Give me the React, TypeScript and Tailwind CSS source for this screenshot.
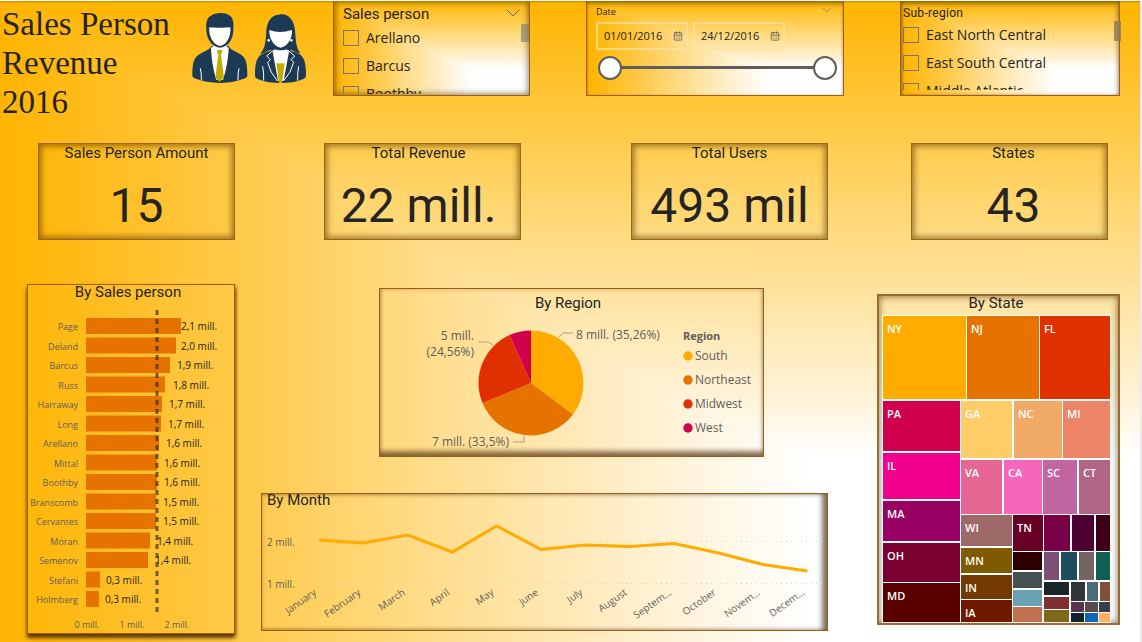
import React from "react";
import { CalendarDays, ChevronDown } from "lucide-react";

const pageFill =
  "bg-blend-darken bg-[image:linear-gradient(to_right,#ffb400_0%,#ffc02a_12%,#ffcc50_23%,#ffdb85_36%,#ffe9b8_50%,#fffaf0_66%,#ffffff_71%),linear-gradient(to_bottom,#ffb400_0%,#ffc63a_16%,#ffcb4a_21%,#ffdc85_38%,#ffe4a4_47%,#fff3d8_62%,#ffffff_71%)]";

const din = "font-['Roboto',sans-serif]";
const border = "border border-[#a05c10]";

const kpis = [
  { title: "Sales Person Amount", value: "15", col: "col-start-2" },
  { title: "Total Revenue", value: "22 mill.", col: "col-start-4 pr-2" },
  { title: "Total Users", value: "493 mil", col: "col-start-6" },
  { title: "States", value: "43", col: "col-start-8 pl-2" },
];

const people = [
  { name: "Page", end: 181, label: 181, value: "2,1 mill." },
  { name: "Deland", end: 176, label: 181, value: "2,0 mill." },
  { name: "Barcus", end: 170, label: 177, value: "1,9 mill." },
  { name: "Russ", end: 165, label: 173, value: "1,8 mill." },
  { name: "Harraway", end: 162, label: 169, value: "1,7 mill." },
  { name: "Long", end: 161, label: 168, value: "1,7 mill." },
  { name: "Arellano", end: 159, label: 166, value: "1,6 mill." },
  { name: "Mittal", end: 157, label: 164, value: "1,6 mill." },
  { name: "Boothby", end: 157, label: 164, value: "1,6 mill." },
  { name: "Branscomb", end: 156, label: 163, value: "1,5 mill." },
  { name: "Cervantes", end: 156, label: 163, value: "1,5 mill." },
  { name: "Moran", end: 150, label: 157, value: "1,4 mill." },
  { name: "Semenov", end: 148, label: 155, value: "1,4 mill." },
  { name: "Stefani", end: 100, label: 106, value: "0,3 mill." },
  { name: "Holmberg", end: 99, label: 105, value: "0,3 mill." },
];

const months: [string, number][] = [
  ["January", 540],
  ["February", 543],
  ["March", 535],
  ["April", 552],
  ["May", 526],
  ["June", 549.5],
  ["July", 545],
  ["August", 546.5],
  ["Septem...", 543.5],
  ["October", 553],
  ["Novem...", 564.5],
  ["Decem...", 571],
];
const monthX = (i: number) => 319 + i * 44.4;

const slices = [
  { name: "South", share: 35.26, color: "#ffab00" },
  { name: "Northeast", share: 33.5, color: "#e67200" },
  { name: "Midwest", share: 24.56, color: "#e03000" },
  { name: "West", share: 6.68, color: "#d1004c" },
];

// left, top, right, bottom, colour, label
const cells: [number, number, number, number, string, string?][] = [
  [883, 316, 966, 399, "#ffab00", "NY"],
  [967, 316, 1039, 399, "#e67200", "NJ"],
  [1040, 316, 1110, 399, "#e03000", "FL"],
  [883, 401, 960, 451, "#d1004c", "PA"],
  [883, 453, 960, 499, "#f0008c", "IL"],
  [883, 501, 960, 541, "#990063", "MA"],
  [883, 543, 960, 582, "#7a0030", "OH"],
  [883, 583, 960, 622, "#5a0000", "MD"],
  [961, 401, 1012, 458, "#ffcd68", "GA"],
  [1014, 401, 1062, 458, "#f0a966", "NC"],
  [1063, 401, 1110, 458, "#ed8468", "MI"],
  [961, 460, 1002, 514, "#e56693", "VA"],
  [1004, 460, 1042, 514, "#f666ba", "CA"],
  [1043, 460, 1077, 514, "#c266a2", "SC"],
  [1079, 460, 1110, 514, "#af6683", "CT"],
  [961, 515, 1012, 546, "#9d6868", "WI"],
  [961, 548, 1012, 573, "#805a00", "MN"],
  [961, 575, 1012, 599, "#733900", "IN"],
  [961, 600, 1012, 622, "#701800", "IA"],
  [1013, 515, 1043, 551, "#690026", "TN"],
  [1044, 515, 1070, 551, "#780046"],
  [1072, 515, 1094, 551, "#4d0032"],
  [1096, 515, 1110, 551, "#3d0018"],
  [1013, 552, 1042, 570, "#2d0000"],
  [1013, 572, 1042, 588, "#475052"],
  [1013, 590, 1042, 606, "#6aa1b3"],
  [1013, 607, 1042, 622, "#bf7150"],
  [1044, 552, 1059, 580, "#7d5175"],
  [1061, 552, 1077, 580, "#1c4e5d"],
  [1079, 552, 1094, 580, "#766464"],
  [1096, 552, 1110, 580, "#0f5f53"],
  [1044, 582, 1069, 595, "#1c2628"],
  [1044, 597, 1069, 609, "#803032"],
  [1044, 610, 1069, 622, "#7b681a"],
  [1071, 582, 1085, 601, "#2f3538"],
  [1087, 582, 1098, 601, "#496c78"],
  [1100, 582, 1110, 601, "#80503a"],
  [1071, 602, 1084, 612, "#56344f"],
  [1085, 602, 1098, 612, "#564a4c"],
  [1099, 602, 1110, 612, "#383e4c"],
  [1071, 613, 1084, 622, "#0c252c"],
  [1085, 613, 1098, 622, "#0a68bc"],
  [1099, 613, 1110, 622, "#ffb060"],
];

function piePath(startShare: number, share: number) {
  const at = (s: number) => {
    const a = (s / 100) * Math.PI * 2;
    return `${(531 + 52.5 * Math.sin(a)).toFixed(2)} ${(383 - 52.5 * Math.cos(a)).toFixed(2)}`;
  };
  return `M531 383L${at(startShare)}A52.5 52.5 0 0 1 ${at(startShare + share)}Z`;
}

function People() {
  return (
    <svg viewBox="570 30 360 228" className="mt-[9px] w-[120px] max-w-full" role="img" aria-label="Sales people">
      <path d="M577 225C577 185 583 172 600 162C612 154 630 150 634 138L686 138C690 150 708 154 720 162C736 172 742 185 742 225C742 230 740 233 735 235C712 244 690 249 660 249C630 249 606 244 584 235C579 233 577 230 577 225Z" fill="#1c3a53" />
      <path d="M633 144L644 135H675L686 144C685 175 678 212 669 240H649C640 212 634 175 633 144Z" fill="#fff" />
      <path d="M651 150H667L666 158L663 163L672 234L659 245L646 234L655 163L652 158Z" fill="#bfae00" />
      <path d="M620 100C617 72 618 54 633 47C646 37 675 36 687 46C702 52 702 75 699 100C697 122 680 143 660 143C640 143 623 122 620 100Z" fill="#1c3a53" />
      <path d="M628 82C645 84 674 84 691 82C694 110 679 136 660 138C641 136 625 110 628 82Z" fill="#fff" />
      <path d="M601 205Q605 222 604 241M717 205Q713 222 714 241" fill="none" stroke="#fff" strokeWidth="3" />
      <path d="M765 225C765 188 771 172 785 163C797 156 816 153 822 144H862C868 153 887 156 899 163C912 172 918 188 918 225C918 231 916 234 910 237C890 246 866 249 842 249C818 249 794 246 773 237C767 234 765 231 765 225Z" fill="#1c3a53" />
      <path d="M780 162C797 145 797 120 799 92C801 64 815 44 837 44C862 38 880 58 884 84C888 110 885 142 902 160C890 160 882 154 876 150H808C801 155 790 160 780 162Z" fill="#1c3a53" />
      <path d="M824 148C834 152 850 152 860 148L867 155L851 242H834L818 155Z" fill="#fff" />
      <path d="M829 190H854L846 249H837Z" fill="#bfae00" />
      <path d="M808 90C830 98 852 97 876 90C877 118 862 139 842 143C822 139 807 118 808 90Z" fill="#fff" />
      <circle cx="806" cy="121" r="4" fill="#fff" />
      <circle cx="874" cy="121" r="4" fill="#fff" />
      <path d="M820 151L800 168L811 179L803 187Q810 218 832 243M864 151L884 168L873 179L881 187Q874 218 850 243M788 199Q792 218 791 242M896 199Q892 218 893 242" fill="none" stroke="#fff" strokeWidth="3" />
    </svg>
  );
}

function Option({ label }: { label: string }) {
  return (
    <label className="flex h-7 shrink-0 items-center gap-[7px] text-[14px] leading-7 whitespace-nowrap text-[#252423]">
      <input type="checkbox" className="size-4 shrink-0 appearance-none border border-[#777] checked:bg-[#666]" />
      {label}
    </label>
  );
}

const thumb =
  "pointer-events-none absolute inset-x-0 top-0 h-6 w-full appearance-none bg-transparent [&::-webkit-slider-thumb]:pointer-events-auto [&::-webkit-slider-thumb]:size-6 [&::-webkit-slider-thumb]:appearance-none [&::-webkit-slider-thumb]:rounded-full [&::-webkit-slider-thumb]:border-2 [&::-webkit-slider-thumb]:border-[#605e5c] [&::-webkit-slider-thumb]:bg-white";

function DateField({ label, value }: { label: string; value: string }) {
  return (
    <div className="flex h-7 w-[92px] items-center border-2 border-[#ffe3a3]/70 pr-[3px] pl-1.5">
      <input aria-label={label} defaultValue={value} className="w-full min-w-0 bg-transparent text-[11px] text-[#252423] outline-none" />
      <CalendarDays className="size-[10px] shrink-0 text-[#605e5c]" />
    </div>
  );
}

export default function App() {
  let total = 0;
  return (
    <main className={`flex min-h-screen flex-col border-t border-r-2 border-t-white border-r-[#ececec] bg-origin-border font-['Open_Sans',sans-serif] shadow-[inset_0_2px_2px_-1px_rgba(120,70,0,0.4)] ${pageFill}`}>
      <header className="grid grid-cols-[190fr_143fr_197fr_56fr_258fr_56fr_220fr_20fr]">
        <h1 className="pt-1 pl-0.5 font-['Liberation_Serif',serif] text-[33px] leading-[39px] whitespace-nowrap text-[#252423]">
          <span className="block">Sales Person</span>
          <span className="block">Revenue</span>
          <span className="block">2016</span>
        </h1>
        <People />
        <section className={`relative h-[95px] min-w-0 overflow-hidden border-t-0 pl-[9px] shadow-[inset_0_0_6px_1px_rgba(60,40,0,0.6)] ${border} ${pageFill}`}>
          <div className="flex h-[23px] items-center justify-between pt-1 pr-1">
            <h2 className={`text-[15px] text-[#252423] ${din}`}>Sales person</h2>
            <ChevronDown className="mb-1 size-6 text-[#666]" strokeWidth={1} />
          </div>
          <div className="flex h-[70px] flex-col overflow-hidden">
            <Option label="Arellano" />
            <Option label="Barcus" />
            <Option label="Boothby" />
          </div>
          <span className="absolute top-[23px] right-0 h-[18px] w-2 bg-[#777]/60" />
        </section>
        <section className={`col-start-5 h-[95px] min-w-0 border-t-0 pr-2 pl-[9px] shadow-[inset_0_4px_5px_-2px_rgba(60,40,0,0.6),inset_0_0_2px_rgba(90,50,0,0.3)] ${border} ${pageFill}`}>
          <div className="flex h-[21px] items-center justify-between">
            <h2 className="text-[9px] text-[#252423]">Date</h2>
            <ChevronDown className="mb-1 size-4 text-[#777]" strokeWidth={1} />
          </div>
          <div className="flex gap-[5px]">
            <DateField label="Start date" value="01/01/2016" />
            <DateField label="End date" value="24/12/2016" />
          </div>
          <div className="relative mt-[6px] -mr-0.5 ml-0.5 h-6">
            <div className="absolute inset-x-3 top-[10px] h-[3px] bg-[#605e5c]" />
            <input type="range" aria-label="Range start" min={0} max={358} defaultValue={0} className={thumb} />
            <input type="range" aria-label="Range end" min={0} max={358} defaultValue={358} className={thumb} />
          </div>
        </section>
        <section className={`relative col-start-7 h-[95px] min-w-0 border-t-0 pl-0.5 shadow-[inset_-1px_3px_5px_rgba(60,40,0,0.5),inset_1px_0_3px_rgba(60,40,0,0.4)] ${border} ${pageFill}`}>
          <h2 className={`h-5 pt-1 text-[12px] leading-4 tracking-wide text-[#252423] ${din}`}>Sub-region</h2>
          <div className="flex h-[69px] flex-col overflow-hidden">
            <Option label="East North Central" />
            <Option label="East South Central" />
            <Option label="Middle Atlantic" />
          </div>
          <span className="absolute top-5 -right-0.5 h-5 w-[7px] bg-[#8a7a58]/80" />
        </section>
      </header>

      <div className="-mt-[22px] grid grid-cols-[38fr_197fr_89fr_197fr_110fr_197fr_83fr_197fr_32fr] pt-[43px]">
        {kpis.map((k) => (
          <section key={k.title} className={`flex h-[97px] min-w-0 flex-col items-center border border-[#a0650f] pt-px whitespace-nowrap text-[#252423] shadow-[inset_0_0_6px_2px_rgba(80,50,0,0.6)] ${din} ${k.col}`}>
            <h2 className="text-[15px] leading-4">{k.title}</h2>
            <p className="mt-[17px] text-[48px] leading-[56px]">{k.value}</p>
          </section>
        ))}
      </div>

      <div className="grid grid-cols-[27fr_208fr_26fr_567fr_49fr_243fr_20fr] items-start pt-11 pb-1">
        <section className={`col-start-2 min-w-0 shadow-[0_4px_4px_rgba(80,45,0,0.85),1px_2px_3px_rgba(80,45,0,0.5)] ${border}`}>
          <svg viewBox="28 285 206 348" className="block w-full" role="img" aria-label="By Sales person">
            <text x="128" y="297" textAnchor="middle" fontSize="15" fill="#252423" className={din}>By Sales person</text>
            {[87, 132, 177].map((x, i) => (
              <g key={x}>
                <line x1={x} x2={x} y1="310" y2="615" stroke="#d8c8a8" strokeDasharray="1 4" />
                <text x={x} y="628" textAnchor="middle" fontSize="9" fill="#605e5c">{i} mill.</text>
              </g>
            ))}
            {people.map((p, i) => (
              <rect key={p.name} x="86" y={318 + i * 19.5} width={p.end - 86} height="16" fill="#e67200" />
            ))}
            <line x1="157" x2="157" y1="310" y2="615" stroke="#252423" strokeOpacity="0.65" strokeWidth="3" strokeDasharray="5 4" />
            {people.map((p, i) => (
              <g key={p.name}>
                <text x="78" y={330 + i * 19.5} textAnchor="end" fontSize="9" fill="#605e5c">{p.name}</text>
                <text x={p.label} y={330 + i * 19.5} fontSize="10" fill="#252423">{p.value}</text>
              </g>
            ))}
          </svg>
        </section>

        <div className="col-start-4 flex min-w-0 flex-col gap-9 pt-1">
          <section className={`ml-[20.8%] w-[67.9%] shadow-[inset_0_-6px_5px_-1px_rgba(80,50,20,0.65),inset_0_0_4px_rgba(90,50,0,0.3)] ${border}`}>
            <svg viewBox="380 289 383 167" className="block w-full" role="img" aria-label="By Region">
              <text x="568" y="308" textAnchor="middle" fontSize="15" fill="#252423" className={din}>By Region</text>
              {slices.map((s) => {
                const d = piePath(total, s.share);
                total += s.share;
                return <path key={s.name} d={d} fill={s.color} />;
              })}
              <path d="M559 337L563 333H573M493 345L488 342H478M524 436V442H513" fill="none" stroke="#b0a080" />
              <g fontSize="12" fill="#605e5c">
                <text x="576" y="339">8 mill. (35,26%)</text>
                <text x="474" y="340" textAnchor="end">5 mill.</text>
                <text x="474" y="356" textAnchor="end">(24,56%)</text>
                <text x="509" y="446" textAnchor="end">7 mill. (33,5%)</text>
                <text x="683" y="340" fontWeight="700" fontSize="11">Region</text>
                {slices.map((s, i) => (
                  <g key={s.name}>
                    <circle cx="688" cy={356 + i * 24} r="4.7" fill={s.color} />
                    <text x="695" y={360 + i * 24}>{s.name}</text>
                  </g>
                ))}
              </g>
            </svg>
          </section>
          <section className={`shadow-[inset_-6px_0_5px_-1px_rgba(60,50,30,0.65),inset_0_0_4px_rgba(90,50,0,0.35)] ${border}`}>
            <svg viewBox="262 494 565 136" className="block w-full" role="img" aria-label="By Month">
              <text x="267" y="505" fontSize="15" fill="#252423" className={din}>By Month</text>
              {[541.5, 583.5].map((y, i) => (
                <g key={y}>
                  <line x1="301" x2="826" y1={y} y2={y} stroke="#d8d0c0" strokeDasharray="1 4" />
                  <text x="267" y={y + 4} fontSize="10" fill="#605e5c">{2 - i} mill.</text>
                </g>
              ))}
              <polyline points={months.map(([, y], i) => `${monthX(i)},${y}`).join(" ")} fill="none" stroke="#ffab00" strokeWidth="3" />
              {months.map(([m], i) => (
                <text key={m} transform={`translate(${monthX(i) - 2} 594) rotate(-35)`} textAnchor="end" fontSize="10" fill="#605e5c">{m}</text>
              ))}
            </svg>
          </section>
        </div>

        <section className="col-start-6 mt-[10px] min-w-0 border-2 border-[#a06a2a] shadow-[inset_0_0_6px_1px_rgba(60,40,10,0.55)]">
          <svg viewBox="879 296 239 327" className="block w-full" role="img" aria-label="By State">
            <text x="996" y="308" textAnchor="middle" fontSize="15" fill="#252423" className={din}>By State</text>
            <rect x="882" y="315" width="229" height="308" fill="#fff" fillOpacity="0.85" />
            {cells.map(([l, t, r, b, color, label]) => (
              <g key={`${l}-${t}`}>
                <rect x={l} y={t} width={r - l} height={b - t} fill={color} />
                {label && <text x={l + 4} y={t + 17} fontSize="11" fontWeight="600" fill="#fff">{label}</text>}
              </g>
            ))}
          </svg>
        </section>
      </div>
    </main>
  );
}
